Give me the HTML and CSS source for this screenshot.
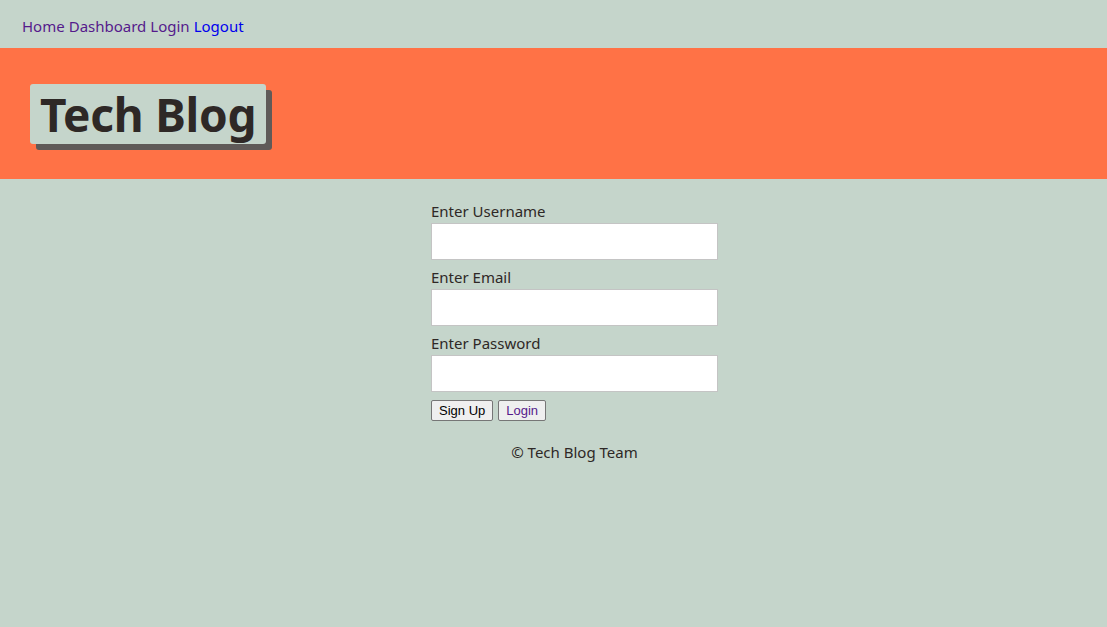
FILE: index.html
```html
<!DOCTYPE html>
<html>
<head>
<meta charset="utf-8">
<title>Tech Blog</title>
<link rel="stylesheet" href="styles.css">
</head>
<body>
<nav class="nav">
  <a class="visited" href="#">Home</a>
  <a class="visited" href="#">Dashboard</a>
  <a class="visited" href="#">Login</a>
  <a class="link" href="#">Logout</a>
</nav>
<header class="hero">
  <h1 class="title">Tech Blog</h1>
</header>
<main class="main">
  <form class="form">
    <label class="label">Enter Username</label>
    <input class="input" type="text">
    <label class="label">Enter Email</label>
    <input class="input" type="text">
    <label class="label">Enter Password</label>
    <input class="input" type="password">
    <div class="buttons">
      <button class="btn" type="button">Sign Up</button>
      <button class="btn btn-login" type="button">Login</button>
    </div>
  </form>
  <footer class="footer">© Tech Blog Team</footer>
</main>
</body>
</html>
```
FILE: styles.css
```css
html, body {
  margin: 0;
  padding: 0;
}
body {
  background: #c5d5cb;
  font-family: "Noto Sans", "Open Sans", sans-serif;
  color: #2e2826;
  min-height: 627px;
}
.nav {
  height: 48px;
  box-sizing: border-box;
  padding-top: 4px;
  display: flex;
  align-items: center;
  gap: 4px;
  padding-left: 22px;
  font-size: 15px;
}
.nav a {
  text-decoration: none;
}
.nav .visited { color: #551a8b; }
.nav .link { color: #0000ee; }
.hero {
  background: #ff7246;
  height: 131px;
  display: flex;
  align-items: center;
  padding-left: 30px;
  box-sizing: border-box;
}
.title {
  margin: 0;
  background: #c5d5cb;
  border-radius: 3px;
  box-shadow: 6px 6px 0 #5f5a58;
  font-size: 46px;
  font-weight: 700;
  line-height: 60px;
  height: 60px;
  padding: 0 10px;
  letter-spacing: -0.25px;
  color: #2e2826;
}
.main {
  display: flex;
  flex-direction: column;
  align-items: center;
  padding-left: 42px;
  padding-top: 21px;
}
.form {
  width: 287px;
  display: flex;
  flex-direction: column;
}
.label {
  font-size: 15px;
  line-height: 22px;
  height: 22px;
  margin-bottom: 1px;
}
.input {
  height: 37px;
  box-sizing: border-box;
  border: 1px solid #c4c4c4;
  background: #fff;
  margin: 0 0 6px 0;
  padding: 0 4px;
}
.buttons {
  display: flex;
  gap: 5px;
  margin-top: 2px;
}
.btn {
  font-family: "Liberation Sans", Arial, sans-serif;
  font-size: 13px;
  height: 21px;
  padding: 0 7px;
  border: 1px solid #767676;
  border-radius: 2px;
  background: #efefef;
  color: #000;
}
.btn-login {
  color: #551a8b;
}
.footer {
  margin-top: 20px;
  font-size: 15px;
  line-height: 22px;
}
```
